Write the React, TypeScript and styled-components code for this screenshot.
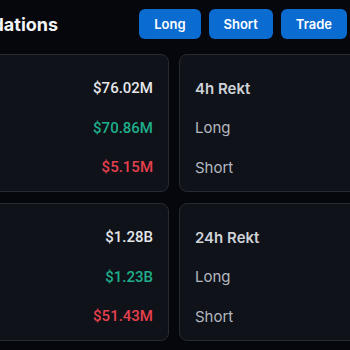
import React from 'react';
import styled, { createGlobalStyle } from 'styled-components';

const GlobalStyle = createGlobalStyle`
  html, body {
    margin: 0;
    padding: 0;
    background-color: #05070c;
    overflow: hidden;
  }
`;

interface Stat {
  title: string;
  total: string;
  long: string;
  short: string;
}

const stats: Stat[] = [
  { title: '1h Rekt', total: '$76.02M', long: '$70.86M', short: '$5.15M' },
  { title: '4h Rekt', total: '$142.37M', long: '$128.91M', short: '$13.46M' },
  { title: '12h Rekt', total: '$1.28B', long: '$1.23B', short: '$51.43M' },
  { title: '24h Rekt', total: '$1.64B', long: '$1.55B', short: '$92.18M' },
];

const App = () => {
  return (
    <Page>
      <GlobalStyle />
      <Header>
        <Title>Liquidations</Title>
        <Actions>
          <Button type='button'>Long</Button>
          <Button type='button'>Short</Button>
          <Button type='button'>Trade</Button>
        </Actions>
      </Header>
      <Grid>
        {stats.map((s) => (
          <Card key={s.title}>
            <Row>
              <Label bold>{s.title}</Label>
              <Value color='#e4e6ea'>{s.total}</Value>
            </Row>
            <Row>
              <Label>Long</Label>
              <Value color='#1fae8b'>{s.long}</Value>
            </Row>
            <Row>
              <Label>Short</Label>
              <Value color='#e5404e'>{s.short}</Value>
            </Row>
          </Card>
        ))}
      </Grid>
    </Page>
  );
};

export default App;

const Page = styled.div`
  margin-left: -111px;
  width: 458px;
  font-family: Inter, 'Noto Sans', sans-serif;
`;

const Header = styled.div`
  display: flex;
  align-items: center;
  justify-content: space-between;
  padding: 9px 0 0 61px;
  margin-bottom: 15px;
`;

const Title = styled.h1`
  margin: 0;
  font-size: 18px;
  font-weight: 700;
  color: #f4f5f7;
`;

const Actions = styled.div`
  display: flex;
  gap: 8px;
`;

const Button = styled.button`
  height: 30px;
  padding: 0 15px;
  font-family: Inter, 'Noto Sans', sans-serif;
  font-size: 13px;
  font-weight: 600;
  color: #fff;
  background-color: #0a6bd0;
  border: none;
  border-radius: 6px;
`;

const Grid = styled.div`
  display: grid;
  grid-template-columns: 280px 280px;
  gap: 11px 10px;
`;

const Card = styled.div`
  display: flex;
  flex-direction: column;
  gap: 15.5px;
  padding: 21px 15px 12px;
  background-color: #0f1218;
  border: 1px solid #262a33;
  border-radius: 8px;
`;

const Row = styled.div`
  display: flex;
  align-items: center;
  justify-content: space-between;
  height: 24px;
`;

const Label = styled.span<{ bold?: boolean }>`
  font-size: 15px;
  font-weight: ${(props) => (props.bold ? 600 : 400)};
  color: ${(props) => (props.bold ? '#cfd2d8' : '#b4b8c0')};
`;

const Value = styled.span<{ color: string }>`
  font-family: Roboto, 'Liberation Sans', sans-serif;
  font-size: 15px;
  font-weight: 500;
  color: ${(props) => props.color};
`;
